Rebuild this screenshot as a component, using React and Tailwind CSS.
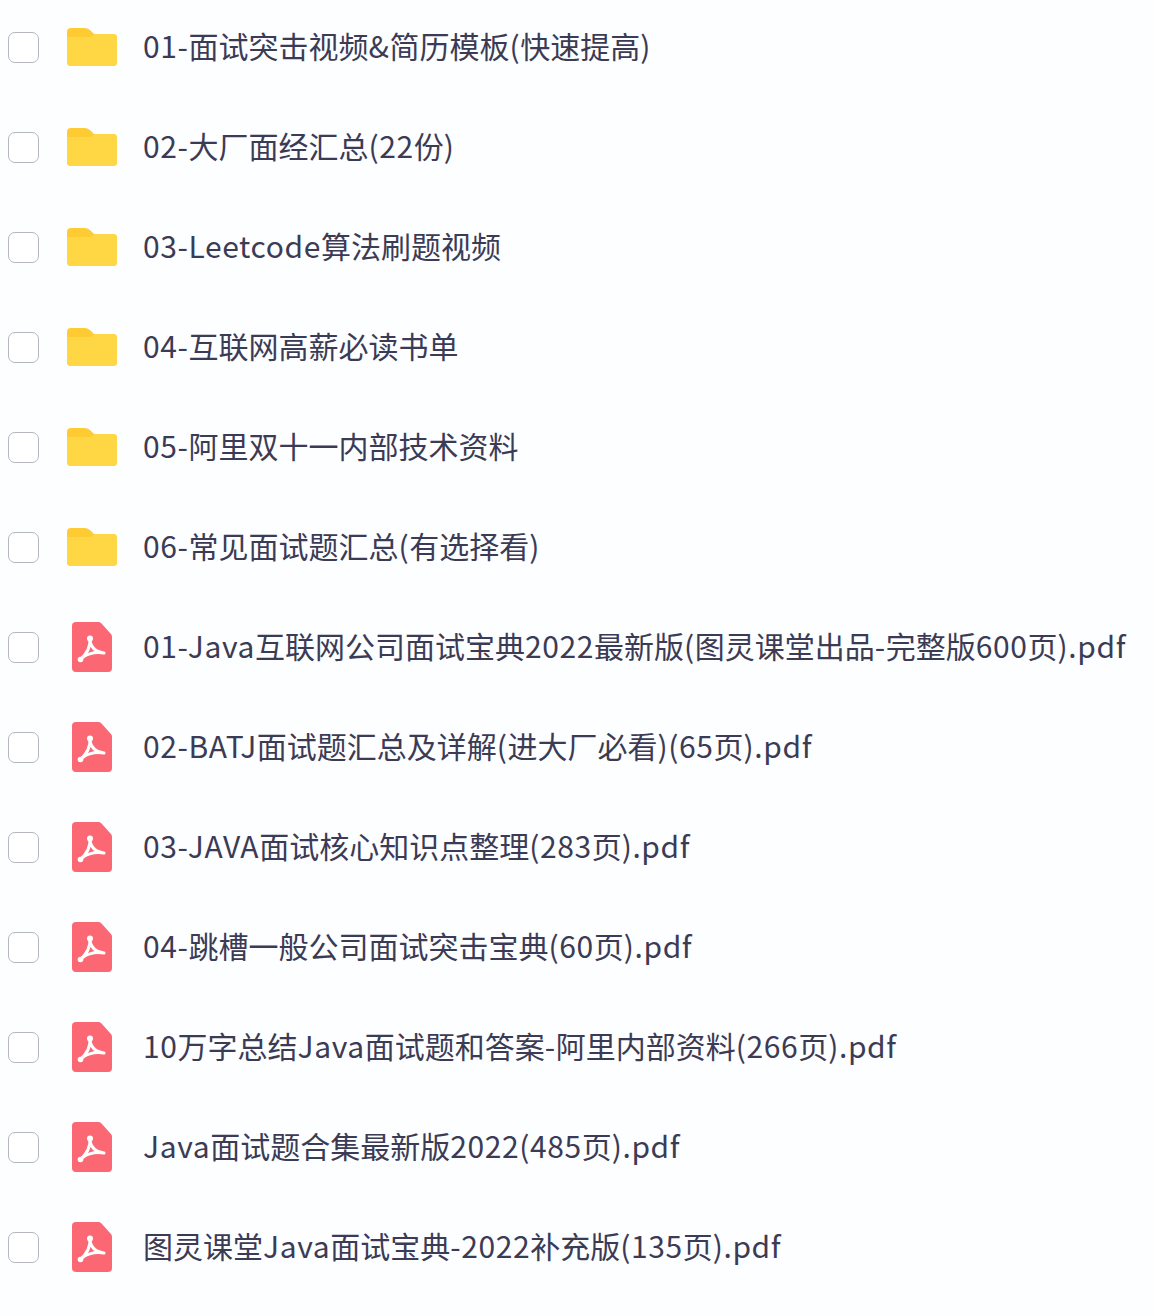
const folders = [
  "01-面试突击视频&简历模板(快速提高)",
  "02-大厂面经汇总(22份)",
  "03-Leetcode算法刷题视频",
  "04-互联网高薪必读书单",
  "05-阿里双十一内部技术资料",
  "06-常见面试题汇总(有选择看)",
];

const pdfs = [
  "01-Java互联网公司面试宝典2022最新版(图灵课堂出品-完整版600页).pdf",
  "02-BATJ面试题汇总及详解(进大厂必看)(65页).pdf",
  "03-JAVA面试核心知识点整理(283页).pdf",
  "04-跳槽一般公司面试突击宝典(60页).pdf",
  "10万字总结Java面试题和答案-阿里内部资料(266页).pdf",
  "Java面试题合集最新版2022(485页).pdf",
  "图灵课堂Java面试宝典-2022补充版(135页).pdf",
];

const FolderIcon = () => (
  <svg width="50" height="38" viewBox="0 0 50 38">
    <path
      d="M0 4a4 4 0 0 1 4-4h13c3 0 5 1 7 3l3 3h19a4 4 0 0 1 4 4v24a4 4 0 0 1-4 4H4a4 4 0 0 1-4-4z"
      fill="#ffcb33"
    />
    <path
      d="M0 9h22c3 0 4-1 5-3h19a4 4 0 0 1 4 4v24a4 4 0 0 1-4 4H4a4 4 0 0 1-4-4z"
      fill="#ffd643"
    />
  </svg>
);

const PdfIcon = () => (
  <svg width="40" height="50" viewBox="0 0 40 50">
    <path
      d="M4 0h22c1.500 0 2.500.5 3.500 1.500l9 10c1 1 1.500 2 1.500 3.500v31a4 4 0 0 1-4 4H4a4 4 0 0 1-4-4V4a4 4 0 0 1 4-4z"
      fill="#fb6772"
    />
    <circle cx="18" cy="16.500" r="3" fill="#fff" />
    <path
      d="M18 16c-.5 8 5 14 14 15M18 16c.5 8-3 16-10 22M8 38c4-5 14-9 24-7"
      fill="none"
      stroke="#fff"
      strokeWidth="3"
      strokeLinecap="round"
      strokeLinejoin="round"
    />
    <circle cx="8.500" cy="37.500" r="2.800" fill="#fff" />
  </svg>
);

// latin runs are spaced out a bit in the original, the chinese ones are not
const FileName = ({ name }) => (
  <span className="mb-[4px] whitespace-nowrap text-[30px] leading-[40px] text-[#3c3b55]">
    {name.split(/([\u4e00-\u9fff]+)/).map((part, i) =>
      i % 2 === 1 ? (
        <span key={i}>{part}</span>
      ) : (
        <span key={i} className="tracking-[0.6px]">
          {part}
        </span>
      )
    )}
  </span>
);

const Row = ({ name, icon }) => (
  <div className="flex h-[40px] items-center">
    <div className="ml-2 h-[31px] w-[31px] shrink-0 rounded-[7px] border border-[#b4b7bf] bg-white"></div>
    <div className="flex w-[104px] shrink-0 justify-center pl-[1px]">{icon}</div>
    <FileName name={name} />
  </div>
);

export default function App() {
  return (
    <div
      className="flex min-h-[1316px] flex-col gap-[60px] overflow-hidden bg-[#fdfeff] pt-[27px]"
      style={{ fontFamily: '"Noto Sans CJK SC", sans-serif' }}
    >
      {folders.map((name) => (
        <Row key={name} name={name} icon={<FolderIcon />} />
      ))}
      {pdfs.map((name) => (
        <Row key={name} name={name} icon={<PdfIcon />} />
      ))}
    </div>
  );
}
